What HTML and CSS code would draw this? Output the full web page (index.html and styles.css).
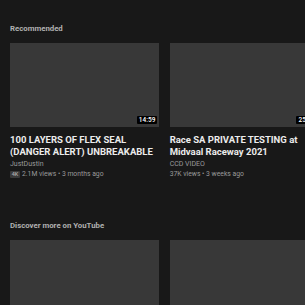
FILE: index.html
```html
<!DOCTYPE html>
<html>
<head>
<meta charset="utf-8">
<link rel="stylesheet" href="styles.css">
</head>
<body>
<section class="shelf">
  <h2 class="shelf-title">Recommended</h2>
  <div class="row">
    <div class="card">
      <div class="thumb"><span class="dur">14:59</span></div>
      <div class="title">100 LAYERS OF FLEX SEAL (DANGER ALERT) UNBREAKABLE</div>
      <div class="channel">JustDustin</div>
      <div class="meta"><span class="badge">4K</span>2.1M views • 3 months ago</div>
    </div>
    <div class="card">
      <div class="thumb"><span class="dur">25:08</span></div>
      <div class="title">Race SA PRIVATE TESTING at Midvaal Raceway 2021</div>
      <div class="channel">CCD VIDEO</div>
      <div class="meta">37K views • 3 weeks ago</div>
    </div>
  </div>
</section>
<section class="shelf shelf2">
  <h2 class="shelf-title">Discover more on YouTube</h2>
  <div class="row">
    <div class="card"><div class="thumb"></div></div>
    <div class="card"><div class="thumb"></div></div>
  </div>
</section>
</body>
</html>
```
FILE: styles.css
```css
html, body {
  margin: 0;
  padding: 0;
  background: #181818;
  overflow: hidden;
  height: 305px;
}
body {
  font-family: Roboto, "Liberation Sans", sans-serif;
  padding: 0 10px;
}
.shelf {
  padding-top: 24px;
}
.shelf2 {
  padding-top: 42px;
}
.shelf-title {
  margin: 0 0 9px;
  font-size: 7.8px;
  line-height: 10px;
  font-weight: 700;
  color: #b0b0b0;
}
.row {
  display: flex;
  gap: 10.33px;
  width: 400px;
}
.card {
  flex: 0 0 149.33px;
  width: 149.33px;
}
.thumb {
  position: relative;
  height: 84px;
  background: #383838;
}
.dur {
  position: absolute;
  right: 2px;
  bottom: 3px;
  background: #000;
  color: #fff;
  font-size: 6.5px;
  font-weight: 500;
  line-height: 8px;
  padding: 0 2px;
  border-radius: 1px;
}
.title {
  margin-top: 7px;
  font-size: 9.5px;
  line-height: 12px;
  font-weight: 700;
  color: #ececec;
}
.channel {
  margin-top: 1px;
  font-size: 7px;
  line-height: 10px;
  color: #9a9a9a;
}
.meta {
  font-size: 6.8px;
  line-height: 10px;
  color: #9a9a9a;
  display: flex;
  align-items: center;
  white-space: nowrap;
}
.badge {
  background: #3a3a3a;
  color: #aaa;
  font-size: 5.5px;
  line-height: 7px;
  width: 10px;
  text-align: center;
  margin-right: 2px;
  border-radius: 1px;
  font-weight: 500;
}
```
